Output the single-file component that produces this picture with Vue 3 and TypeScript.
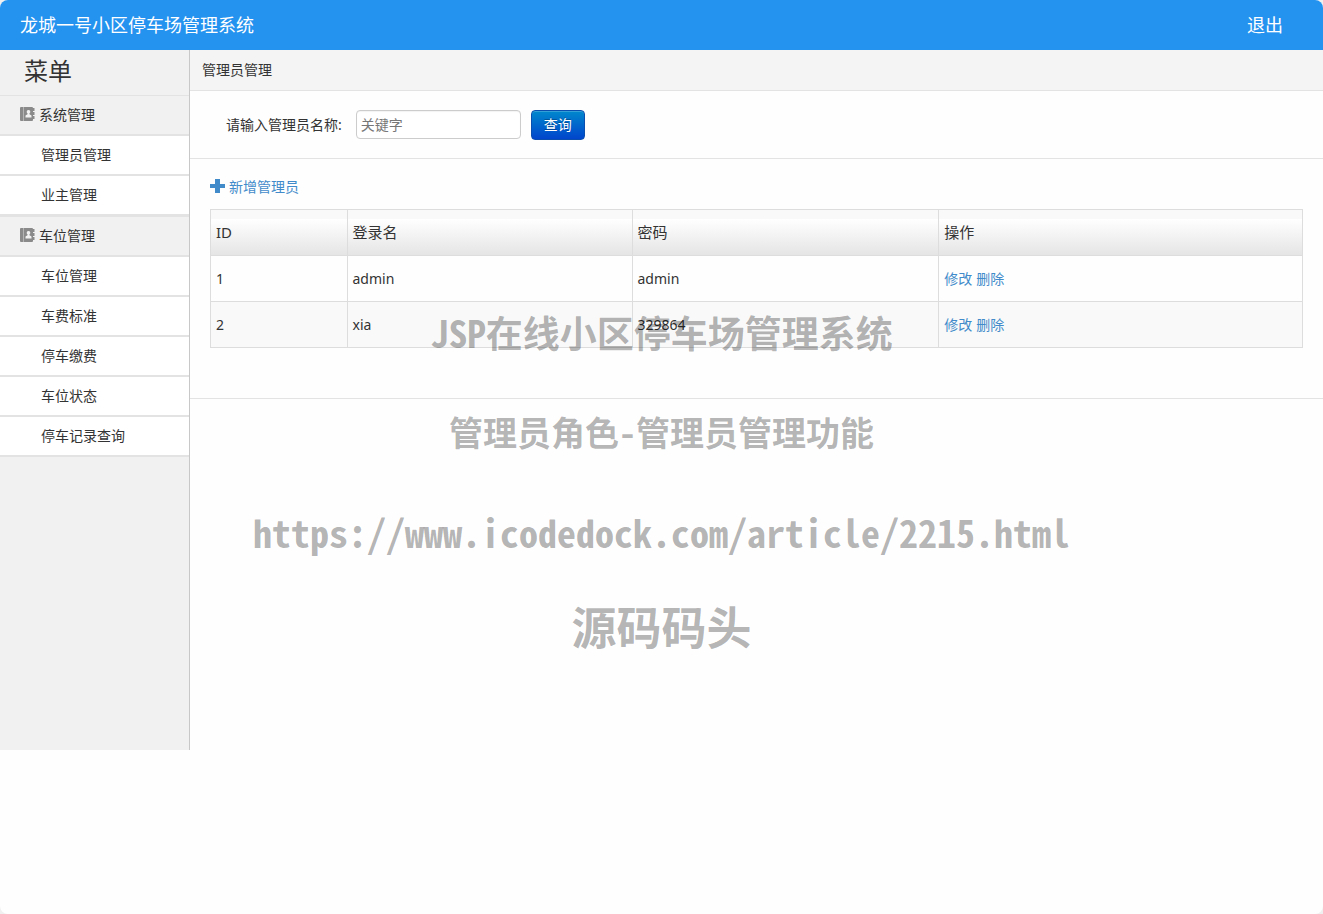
<script setup lang="ts">
import { ref } from 'vue'

interface MenuGroup {
  title: string
  items: string[]
}

interface Admin {
  id: number
  name: string
  password: string
}

const groups: MenuGroup[] = [
  { title: '系统管理', items: ['管理员管理', '业主管理'] },
  { title: '车位管理', items: ['车位管理', '车费标准', '停车缴费', '车位状态', '停车记录查询'] },
]

const admins: Admin[] = [
  { id: 1, name: 'admin', password: 'admin' },
  { id: 2, name: 'xia', password: '329864' },
]

const keyword = ref('')
</script>

<template>
  <div class="page">
    <header class="topbar">
      <h1 class="brand">龙城一号小区停车场管理系统</h1>
      <a class="logout" href="#">退出</a>
    </header>

    <div class="body">
      <nav class="sidebar" aria-labelledby="menu-title">
        <h2 id="menu-title" class="menu-title">菜单</h2>
        <section v-for="group in groups" :key="group.title" class="group">
          <h3 class="group-title">
            <svg class="icon" viewBox="0 0 15 14" aria-hidden="true">
              <path fill="#8a8a8a" d="M1 0h2v14H1a1 1 0 0 1-1-1V1a1 1 0 0 1 1-1z" />
              <path fill="#b4b4b4" d="M3 0h1v14H3z" />
              <path
                fill="#8a8a8a"
                fill-rule="evenodd"
                d="M4 0h8a1 1 0 0 1 1 1h1.500v3H13v1h1.500v3H13v1h1.500v3H13v1a1 1 0 0 1-1 1H4zM8.500 3a1.800 1.800 0 0 0-1 3.300v.9L5.500 8.500V10.500h6V8.500L9.500 7.200V6.300A1.800 1.800 0 0 0 8.500 3z"
              />
            </svg>
            <span>{{ group.title }}</span>
          </h3>
          <ul class="items">
            <li v-for="item in group.items" :key="item">
              <a class="item" href="#">{{ item }}</a>
            </li>
          </ul>
        </section>
      </nav>

      <main class="content">
        <div class="crumb">管理员管理</div>

        <form class="search" @submit.prevent>
          <label class="search-label" for="keyword">请输入管理员名称:</label>
          <input id="keyword" v-model="keyword" class="search-input" type="text" placeholder="关键字" />
          <button class="search-button" type="submit">查询</button>
        </form>

        <div class="list">
          <a class="add" href="#">
            <svg class="icon" viewBox="0 0 15 14" aria-hidden="true">
              <path fill="#428bca" d="M5 0h5v5h5v4h-5v5H5V9H0V5h5z" />
            </svg>
            <span>新增管理员</span>
          </a>
          <table class="table">
            <thead>
              <tr>
                <th class="col-id" scope="col">ID</th>
                <th class="col-name" scope="col">登录名</th>
                <th class="col-password" scope="col">密码</th>
                <th scope="col">操作</th>
              </tr>
            </thead>
            <tbody>
              <tr v-for="admin in admins" :key="admin.id">
                <td>{{ admin.id }}</td>
                <td>{{ admin.name }}</td>
                <td>{{ admin.password }}</td>
                <td>
                  <div class="actions">
                    <a class="action" href="#">修改</a>
                    <a class="action" href="#">删除</a>
                  </div>
                </td>
              </tr>
            </tbody>
          </table>
        </div>
      </main>
    </div>

    <div class="watermark">
      <p class="mark mark-title">JSP在线小区停车场管理系统</p>
      <p class="mark mark-role">管理员角色-管理员管理功能</p>
      <p class="mark mark-url">https://www.icodedock.com/article/2215.html</p>
      <p class="mark mark-site">源码码头</p>
    </div>
  </div>
</template>

<style>
body {
  margin: 0;
  background: #f0f0f0;
}
</style>

<style scoped>
.page {
  position: relative;
  box-sizing: border-box;
  min-height: 100vh;
  overflow: hidden;
  border-radius: 8px;
  background: #fefefe;
  color: #333;
  font-family: "Noto Sans", "Noto Sans CJK SC", sans-serif;
  font-size: 14px;
  line-height: 20px;
}

h1,
h2,
h3,
p,
ul {
  margin: 0;
  padding: 0;
  font-weight: 400;
}

a {
  text-decoration: none;
}

.topbar {
  display: flex;
  align-items: center;
  justify-content: space-between;
  height: 50px;
  padding: 0 40px 0 20px;
  background: #2492ef;
  color: #fff;
}

.brand,
.logout {
  color: #fff;
  font-size: 18px;
  line-height: 26px;
}

.body {
  display: flex;
  align-items: stretch;
  min-height: 700px;
}

.sidebar {
  flex: 0 0 189px;
  border-right: 1px solid #c8c8c8;
  background: #f1f1f1;
}

.menu-title {
  height: 45px;
  padding-left: 24px;
  font-size: 24px;
  line-height: 41px;
}

.group {
  border-bottom: 1px solid #e3e3e3;
}

.group-title {
  display: flex;
  align-items: center;
  gap: 4px;
  height: 38px;
  padding-left: 20px;
  border-top: 1px solid #e3e3e3;
  border-bottom: 1px solid #e3e3e3;
  font-size: 14px;
}

.icon {
  width: 15px;
  height: 14px;
  margin-bottom: 2px;
}

.items {
  list-style: none;
}

.item {
  display: block;
  padding-left: 41px;
  border-top: 1px solid #e3e3e3;
  border-bottom: 1px solid #e3e3e3;
  background: #fff;
  color: #333;
  line-height: 38px;
}

.content {
  flex: 1;
  min-width: 0;
}

.crumb {
  padding-left: 12px;
  border-bottom: 1px solid #e3e3e3;
  background: #f4f4f4;
  line-height: 40px;
}

.search {
  display: flex;
  align-items: center;
  height: 67px;
  padding-left: 36px;
  border-bottom: 1px solid #e3e3e3;
}

.search-label {
  margin-right: 14px;
}

.search-input {
  box-sizing: border-box;
  width: 165px;
  height: 29px;
  margin-right: 10px;
  padding: 0 4px;
  border: 1px solid #ccc;
  border-radius: 4px;
  background: #fff;
  box-shadow: inset 0 1px 1px rgba(0, 0, 0, 0.05);
  color: #333;
  font: inherit;
}

.search-input::placeholder {
  color: #777;
  opacity: 1;
}

.search-button {
  box-sizing: border-box;
  width: 54px;
  height: 30px;
  padding: 0;
  border: 1px solid #0a4fb0;
  border-radius: 4px;
  background: linear-gradient(#0088cc, #0044cc);
  box-shadow: inset 0 1px 0 rgba(255, 255, 255, 0.2);
  color: #fff;
  font: inherit;
  text-shadow: 0 -1px 0 rgba(0, 0, 0, 0.25);
}

.list {
  padding: 18px 20px 50px;
  border-bottom: 1px solid #e3e3e3;
}

.add {
  display: flex;
  align-items: center;
  gap: 4px;
  width: max-content;
  margin-bottom: 12px;
  color: #428bca;
}

.table {
  width: 100%;
  border-collapse: collapse;
  table-layout: fixed;
}

.table th,
.table td {
  box-sizing: border-box;
  height: 46px;
  padding: 0 5px;
  border: 1px solid #ddd;
  font-weight: 400;
  text-align: left;
}

.table th {
  padding-bottom: 2px;
  font-size: 15px;
}

.table thead {
  background: linear-gradient(#f9f9f9 9px, #fff 9px, #e4e4e4);
}

.table tbody tr:nth-child(even) {
  background: #f9f9f9;
}

.col-id {
  width: 12.5%;
}

.col-name {
  width: 26.1%;
}

.col-password {
  width: 28.1%;
}

.actions {
  display: flex;
  gap: 4px;
}

.action {
  color: #428bca;
}

.watermark {
  position: absolute;
  top: 282px;
  right: 0;
  left: 0;
  color: rgba(0, 0, 0, 0.3);
  font-family: "Noto Sans Mono CJK SC", "Noto Sans CJK SC", monospace;
  text-align: center;
  pointer-events: none;
}

.mark {
  font-weight: 700;
  line-height: 100px;
  white-space: nowrap;
}

.mark-title {
  font-size: 37px;
}

.mark-role {
  font-size: 34px;
}

.mark-url {
  font-size: 38px;
}

.mark-site {
  font-size: 45px;
  line-height: 88px;
}
</style>
